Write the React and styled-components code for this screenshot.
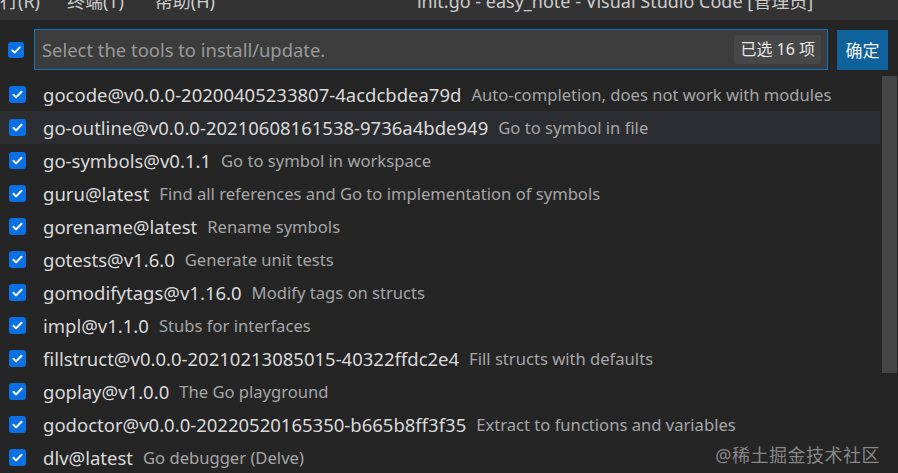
import React from "react";
import styled, { createGlobalStyle } from "styled-components";

const GlobalStyle = createGlobalStyle`
  html, body {
    margin: 0;
    padding: 0;
    background: #252526;
    overflow: hidden;
  }
  body {
    font-family: "Noto Sans", "Noto Sans CJK SC", sans-serif;
  }
`;

const tools = [
  ["gocode@v0.0.0-20200405233807-4acdcbdea79d", "Auto-completion, does not work with modules"],
  ["go-outline@v0.0.0-20210608161538-9736a4bde949", "Go to symbol in file"],
  ["go-symbols@v0.1.1", "Go to symbol in workspace"],
  ["guru@latest", "Find all references and Go to implementation of symbols"],
  ["gorename@latest", "Rename symbols"],
  ["gotests@v1.6.0", "Generate unit tests"],
  ["gomodifytags@v1.16.0", "Modify tags on structs"],
  ["impl@v1.1.0", "Stubs for interfaces"],
  ["fillstruct@v0.0.0-20210213085015-40322ffdc2e4", "Fill structs with defaults"],
  ["goplay@v1.0.0", "The Go playground"],
  ["godoctor@v0.0.0-20220520165350-b665b8ff3f35", "Extract to functions and variables"],
  ["dlv@latest", "Go debugger (Delve)"],
];

const Page = styled.div`
  position: relative;
  width: 898px;
  height: 473px;
  overflow: hidden;
  background: #252526;
`;

const TitleBar = styled.div`
  height: 20px;
  background: #333333;
  display: flex;
  align-items: flex-end;
  overflow: hidden;
  color: #cccccc;
  font-size: 18px;
  white-space: nowrap;
`;

const Menu = styled.span`
  margin-right: ${(p) => p.gap}px;
  line-height: 22px;
  transform: translateY(-8px);
`;

const Header = styled.div`
  display: flex;
  align-items: center;
  padding: 9px 10px 0 8px;
`;

const Box = styled.span`
  flex: none;
  width: ${(p) => p.size}px;
  height: ${(p) => p.size}px;
  border-radius: 3px;
  background: #0b70e4;
  display: flex;
  align-items: center;
  justify-content: center;
`;

const Input = styled.div`
  margin-left: 10px;
  width: 795px;
  height: 41px;
  box-sizing: border-box;
  border: 1px solid #0d78bf;
  background: #3c3c3c;
  display: flex;
  align-items: center;
  justify-content: space-between;
  padding: 0 6px 0 7px;
  font-size: 18.4px;
  color: #9a9a9a;
`;

const Badge = styled.span`
  background: #474747;
  color: #e8e8e8;
  font-size: 16px;
  padding: 0 6px;
  height: 29px;
  line-height: 29px;
  border-radius: 2px;
`;

const OkButton = styled.button`
  margin-left: 9px;
  width: 51px;
  height: 40px;
  border: none;
  background: #0e639c;
  color: #f2f2f2;
  font-family: inherit;
  font-size: 17px;
  padding: 0;
`;

const List = styled.div`
  position: relative;
  margin-top: 8px;
`;

const Row = styled.div`
  height: 33px;
  display: flex;
  align-items: center;
  padding-left: 9px;
  margin-right: 18px;
  background: ${(p) => (p.active ? "#2b2d30" : "transparent")};
  white-space: nowrap;
`;

const Label = styled.span`
  margin-left: 17px;
  color: #dadada;
  font-size: 18.5px;
`;

const Desc = styled.span`
  margin-left: 10px;
  color: #a6a6a6;
  font-size: 16.6px;
`;

const Scrollbar = styled.div`
  position: absolute;
  right: 1px;
  top: -2px;
  width: 15px;
  height: 297px;
  background: #464646;
`;

const Watermark = styled.div`
  position: absolute;
  right: 18px;
  bottom: 6px;
  color: rgba(170, 170, 170, 0.75);
  font-size: 18px;
  letter-spacing: 0.5px;
`;

const Check = ({ size }) => (
  <Box size={size}>
    <svg width={size - 4} height={size - 4} viewBox="0 0 16 16">
      <path
        d="M3 8.4l3.2 3.1L13 4.6"
        fill="none"
        stroke="#ffffff"
        strokeWidth="2.4"
        strokeLinecap="round"
        strokeLinejoin="round"
      />
    </svg>
  </Box>
);

export default function App() {
  return (
    <Page>
      <GlobalStyle />
      <TitleBar>
        <Menu gap={27}>行(R)</Menu>
        <Menu gap={31}>终端(T)</Menu>
        <Menu gap={202}>帮助(H)</Menu>
        <Menu gap={0}>init.go - easy_note - Visual Studio Code [管理员]</Menu>
      </TitleBar>
      <Header>
        <Check size={16} />
        <Input>
          <span>Select the tools to install/update.</span>
          <Badge>已选 16 项</Badge>
        </Input>
        <OkButton>确定</OkButton>
      </Header>
      <List>
        {tools.map(([name, desc], i) => (
          <Row key={name} active={i === 1}>
            <Check size={17} />
            <Label>{name}</Label>
            <Desc>{desc}</Desc>
          </Row>
        ))}
        <Scrollbar />
      </List>
      <Watermark>@稀土掘金技术社区</Watermark>
    </Page>
  );
}
